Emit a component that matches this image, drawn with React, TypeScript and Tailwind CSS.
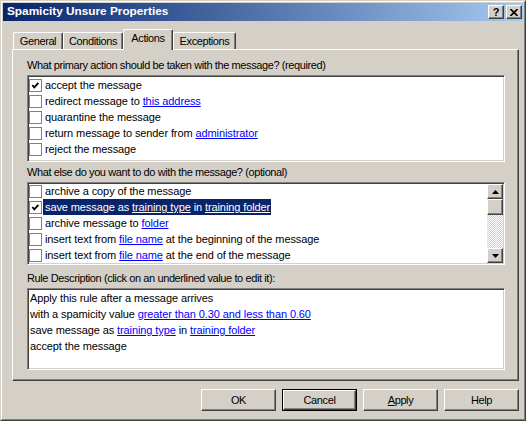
import React from "react";

const Link = ({ children, sel }: { children: React.ReactNode; sel?: boolean }) => (
  <span className={sel ? "underline text-white" : "underline text-[#0000ff]"}>{children}</span>
);

const Check = ({ checked }: { checked?: boolean }) => (
  <div className="w-[13px] h-[13px] shrink-0 bg-white border border-[#808080] flex items-center justify-center">
    {checked && (
      <svg width="11" height="11" viewBox="0 0 11 11">
        <path d="M2.3 5 L4.3 7.4 L8.4 2.8" fill="none" stroke="#000" strokeWidth="1.8" />
      </svg>
    )}
  </div>
);

const Row = ({ checked, sel, children }: { checked?: boolean; sel?: boolean; children: React.ReactNode }) => (
  <div className="h-[16px] flex items-center">
    <Check checked={checked} />
    <span
      className={
        "ml-[1px] pl-[2px] pr-[1px] h-[16px] leading-[16px] whitespace-nowrap " +
        (sel ? "bg-[#0a246a] text-white" : "")
      }
    >
      {children}
    </span>
  </div>
);

const Btn = ({ children, def }: { children: React.ReactNode; def?: boolean }) => (
  <div className={"w-[75px] h-[22px] " + (def ? "border border-black" : "")}>
    <div className="w-full h-full bg-[#d4d0c8] border border-t-white border-l-white border-r-[#404040] border-b-[#404040] shadow-[inset_-1px_-1px_0_#808080] flex items-center justify-center leading-none">
      {children}
    </div>
  </div>
);

const Raised = ({ className, children }: { className: string; children?: React.ReactNode }) => (
  <div
    className={
      "bg-[#d4d0c8] border border-t-white border-l-white border-r-[#404040] border-b-[#404040] shadow-[inset_-1px_-1px_0_#808080] flex items-center justify-center " +
      className
    }
  >
    {children}
  </div>
);

const Tab = ({ label, w, sel }: { label: string; w: string; sel?: boolean }) => (
  <div
    className={
      "flex items-center justify-center bg-[#d4d0c8] border-t border-l border-t-white border-l-white border-r border-r-[#404040] shadow-[inset_-1px_0_0_#808080] rounded-t-[2px] " +
      w +
      (sel ? " h-[21px] -mb-[1px] relative z-10 pb-[3px]" : " h-[17px]")
    }
  >
    {label}
  </div>
);

const sunken =
  "bg-white border border-t-[#808080] border-l-[#808080] border-r-white border-b-white shadow-[inset_1px_1px_0_#404040,inset_-1px_-1px_0_#d4d0c8] tracking-[-0.1px]";

export default function App() {
  return (
    <div className="w-[526px] h-[421px] overflow-hidden font-['Liberation_Sans',Arial,sans-serif] text-[11px] tracking-[-0.4px] text-black bg-[#d4d0c8]">
      <div className="w-full h-full border border-t-[#d4d0c8] border-l-[#d4d0c8] border-r-[#404040] border-b-[#404040]">
        <div className="w-full h-full border border-t-white border-l-white border-r-[#808080] border-b-[#808080] p-[1px] flex flex-col">
          {/* Title bar */}
          <div className="h-[18px] shrink-0 bg-gradient-to-r from-[#0a246a] to-[#a6caf0] flex items-center justify-between pl-[4px] pr-[1px]">
            <span className="text-white font-bold text-[11.8px] tracking-normal leading-none">Spamicity Unsure Properties</span>
            <div className="flex gap-[2px]">
              <Raised className="w-[16px] h-[14px]">
                <span className="font-bold text-[11px] leading-none">?</span>
              </Raised>
              <Raised className="w-[16px] h-[14px]">
                <svg width="8" height="7" viewBox="0 0 8 7">
                  <path d="M0.5 0 L7.5 7 M7.5 0 L0.5 7" stroke="#000" strokeWidth="1.6" />
                </svg>
              </Raised>
            </div>
          </div>

          {/* Tabs */}
          <div className="ml-[9px] mt-[8px] w-[507px]">
            <div className="h-[20px] flex items-end pl-[1px]">
              <Tab label="General" w="w-[50px]" />
              <Tab label="Conditions" w="w-[60px]" />
              <Tab label="Actions" w="w-[50px]" sel />
              <Tab label="Exceptions" w="w-[63px]" />
            </div>
            <div className="h-[332px] border border-t-white border-l-white border-r-[#404040] border-b-[#404040] shadow-[inset_-1px_-1px_0_#808080] pt-[9px] pl-[14px]">
              <div className="h-[13px] leading-[13px] mb-[3px]">
                What primary action should be taken with the message? (required)
              </div>
              <div className={"w-[478px] h-[87px] " + sunken + " pt-[1px] pl-[1px]"}>
                <Row checked>accept the message</Row>
                <Row>
                  redirect message to <Link>this address</Link>
                </Row>
                <Row>quarantine the message</Row>
                <Row>
                  return message to sender from <Link>administrator</Link>
                </Row>
                <Row>reject the message</Row>
              </div>

              <div className="h-[13px] leading-[13px] mt-[4px] mb-[3px]">
                What else do you want to do with the message? (optional)
              </div>
              <div className={"w-[478px] h-[83px] " + sunken + " flex"}>
                <div className="flex-1 pl-[1px]">
                  <Row>archive a copy of the message</Row>
                  <Row checked sel>
                    save message as <Link sel>training type</Link> in <Link sel>training folder</Link>
                  </Row>
                  <Row>
                    archive message to <Link>folder</Link>
                  </Row>
                  <Row>
                    insert text from <Link>file name</Link> at the beginning of the message
                  </Row>
                  <Row>
                    insert text from <Link>file name</Link> at the end of the message
                  </Row>
                </div>
                <div className="w-[16px] h-full flex flex-col mr-[1px] mt-[1px]">
                  <Raised className="w-[16px] h-[15px] shrink-0">
                    <svg width="7" height="4" viewBox="0 0 7 4">
                      <path d="M3.5 0 L7 4 L0 4 Z" fill="#000" />
                    </svg>
                  </Raised>
                  <Raised className="w-[16px] h-[16px] shrink-0" />
                  <div className="flex-1 bg-[repeating-conic-gradient(#d4d0c8_0_25%,#ffffff_0_50%)] bg-[length:2px_2px]" />
                  <Raised className="w-[16px] h-[15px] shrink-0 mb-[2px]">
                    <svg width="7" height="4" viewBox="0 0 7 4">
                      <path d="M0 0 L7 0 L3.5 4 Z" fill="#000" />
                    </svg>
                  </Raised>
                </div>
              </div>

              <div className="h-[13px] leading-[13px] mt-[7px] mb-[3px]">
                Rule Description (click on an underlined value to edit it):
              </div>
              <div className={"w-[478px] h-[82px] " + sunken + " pt-[1px] pl-[2px]"}>
                <div className="h-[16px] leading-[16px]">Apply this rule after a message arrives</div>
                <div className="h-[16px] leading-[16px]">
                  with a spamicity value <Link>greater than 0.30 and less than 0.60</Link>
                </div>
                <div className="h-[16px] leading-[16px]">
                  save message as <Link>training type</Link> in <Link>training folder</Link>
                </div>
                <div className="h-[16px] leading-[16px]">accept the message</div>
              </div>
            </div>
          </div>

          {/* Buttons */}
          <div className="mt-[8px] ml-[198px] flex gap-[6px]">
            <Btn>OK</Btn>
            <Btn def>Cancel</Btn>
            <Btn>
              <span>
                <span className="underline">A</span>pply
              </span>
            </Btn>
            <Btn>Help</Btn>
          </div>
        </div>
      </div>
    </div>
  );
}
